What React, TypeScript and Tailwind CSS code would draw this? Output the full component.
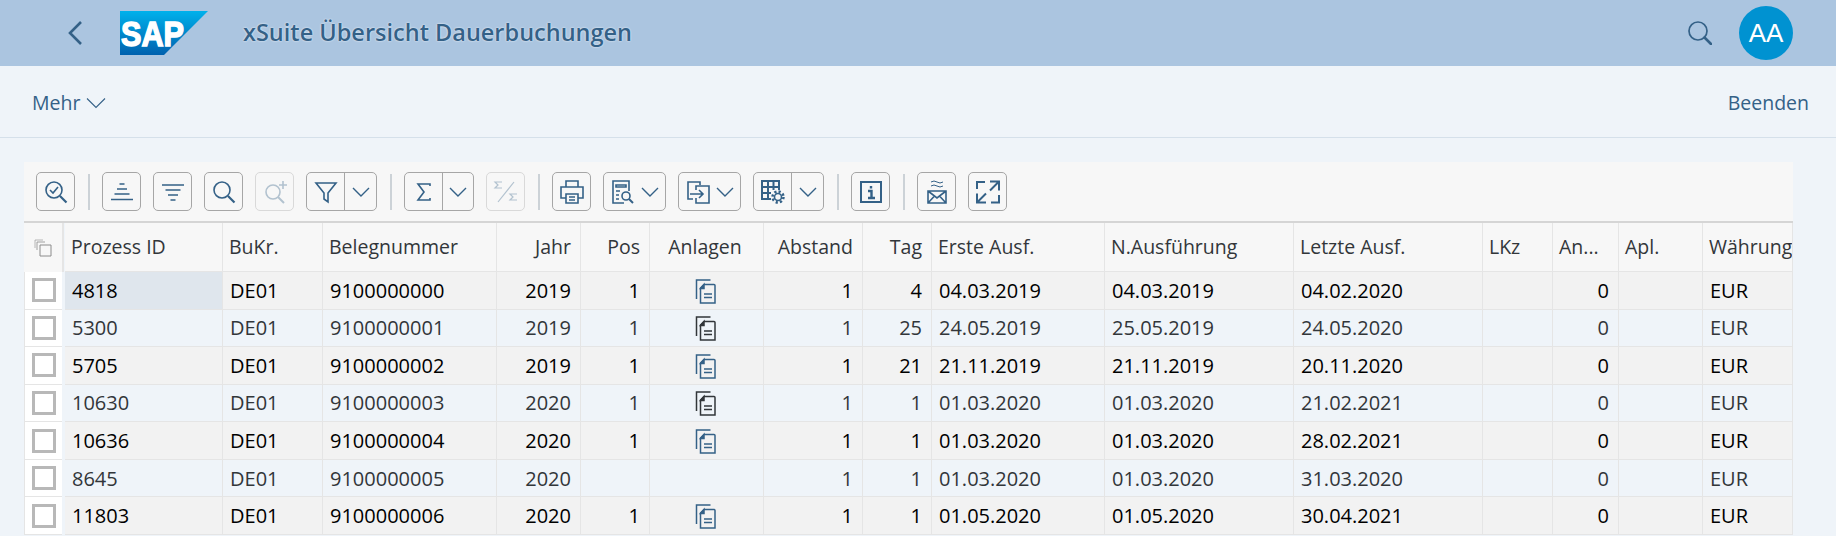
import type { ReactNode } from 'react'

const font = "font-['Open_Sans','Noto_Sans',sans-serif]"
const blue = '#346187'

const cols = 'grid-cols-[41px_158px_100px_174px_84px_69px_114px_99px_69px_173px_189px_189px_70px_66px_84px_90px]'

const headers: [string, string][] = [
  ['Prozess ID', 'left'],
  ['BuKr.', 'left'],
  ['Belegnummer', 'left'],
  ['Jahr', 'right'],
  ['Pos', 'right'],
  ['Anlagen', 'center'],
  ['Abstand', 'right'],
  ['Tag', 'right'],
  ['Erste Ausf.', 'left'],
  ['N.Ausführung', 'left'],
  ['Letzte Ausf.', 'left'],
  ['LKz', 'left'],
  ['An...', 'left'],
  ['Apl.', 'left'],
  ['Währung', 'left'],
]

const rows = [
  ['4818', 'DE01', '9100000000', '2019', '1', true, '1', '4', '04.03.2019', '04.03.2019', '04.02.2020'],
  ['5300', 'DE01', '9100000001', '2019', '1', true, '1', '25', '24.05.2019', '25.05.2019', '24.05.2020'],
  ['5705', 'DE01', '9100000002', '2019', '1', true, '1', '21', '21.11.2019', '21.11.2019', '20.11.2020'],
  ['10630', 'DE01', '9100000003', '2020', '1', true, '1', '1', '01.03.2020', '01.03.2020', '21.02.2021'],
  ['10636', 'DE01', '9100000004', '2020', '1', true, '1', '1', '01.03.2020', '01.03.2020', '28.02.2021'],
  ['8645', 'DE01', '9100000005', '2020', '', false, '1', '1', '01.03.2020', '01.03.2020', '31.03.2020'],
  ['11803', 'DE01', '9100000006', '2020', '1', true, '1', '1', '01.05.2020', '01.05.2020', '30.04.2021'],
] as const

const Btn = ({ children, disabled, w = 'w-[39px]' }: { children: ReactNode; disabled?: boolean; w?: string }) => (
  <div className={`${w} h-[39px] shrink-0 rounded-[5px] border flex items-center justify-center ${disabled ? 'border-[#d9d9d9]' : 'border-[#a6a6a6]'}`}>
    {children}
  </div>
)

const Chev = () => (
  <svg width="20" height="12" viewBox="0 0 20 12" fill="none" stroke={blue} strokeWidth="1.4"><path d="M2 2l8 8 8-8" /></svg>
)

const Split = ({ children, w = 'w-[71px]' }: { children: ReactNode; w?: string }) => (
  <div className={`${w} h-[39px] shrink-0 rounded-[5px] border border-[#a6a6a6] flex items-center`}>
    <div className="w-[38px] h-full flex items-center justify-center border-r border-[#a6a6a6]">{children}</div>
    <div className="flex-1 flex items-center justify-center"><Chev /></div>
  </div>
)

const Sep = () => <div className="w-[2px] h-[36px] ml-[13px] mr-[12px] bg-[#ccd2d7] shrink-0" />

const Ico = ({ children, op = 1 }: { children: ReactNode; op?: number }) => (
  <svg width="26" height="26" viewBox="0 0 26 26" fill="none" stroke={blue} strokeWidth="1.6" opacity={op}>{children}</svg>
)

const Attach = ({ color }: { color: string }) => (
  <svg width="22" height="26" viewBox="0 0 22 26" fill="none" stroke={color} strokeWidth="1.5">
    <path d="M1.500 21V2h14" />
    <path d="M9 6.500h10a1 1 0 0 1 1 1V25H5.500V10z" />
    <path d="M5.500 10.500L9 6.500v4z" fill={color} />
    <path d="M9 16h8M9 19.500h8" />
  </svg>
)

const Toolbar = () => (
  <div className="h-[61px] flex items-center pl-[12px] bg-[#f7f7f7] border-b-2 border-[#d5d5d5]">
    <Btn>
      <Ico><circle cx="11" cy="11" r="8" /><path d="M17 17l6.500 6.500" strokeWidth="2.200" /><path d="M7 11l3 3 5-6" /></Ico>
    </Btn>
    <Sep />
    <div className="flex gap-[12px]">
      <Btn><Ico><path d="M10.500 5h5M8 10h10M5.500 15h15M2 20.500h22" /></Ico></Btn>
      <Btn><Ico><path d="M2 6h22M5.500 11h15M8 16h10M10.500 21h5" /></Ico></Btn>
      <Btn><Ico><circle cx="11" cy="11" r="8" /><path d="M17 17l6.500 6.500" strokeWidth="2.200" /></Ico></Btn>
      <Btn disabled>
        <Ico op={0.35}><circle cx="11" cy="13" r="7" /><path d="M16 18l6 6" strokeWidth="2" /><path d="M21 2v8M17 6h8" /></Ico>
      </Btn>
      <Split><Ico><path d="M3 4h20l-8 10v9l-4-3v-6z" /></Ico></Split>
    </div>
    <Sep />
    <div className="flex gap-[12px]">
      <Split w="w-[70px]"><Ico><path d="M19 7V5H7l6 8-6 8h12v-2" /></Ico></Split>
      <Btn disabled>
        <svg width="26" height="26" viewBox="0 0 26 26" fill="none" stroke={blue} strokeWidth="1.200" opacity="0.35">
          <path d="M9 3H2l3 3-3 3h7M21 3L5 23M24 15h-7l3 3-3 3h7" />
        </svg>
      </Btn>
    </div>
    <Sep />
    <div className="flex gap-[12px]">
      <Btn>
        <Ico><path d="M7 8V2h12v6M7 19H2V8h22v11h-5" /><path d="M7 15h12v9H7zM10 18h6M10 21h6" /></Ico>
      </Btn>
      <Btn w="w-[63px]">
        <div className="flex items-center gap-[4px]">
          <Ico><path d="M14 24H3V2h16v10M6 6h10v2H6zM6 12h4M6 16h3M6 20h3" /><circle cx="16" cy="17" r="4" /><path d="M19 20l4 4" strokeWidth="2" /></Ico>
          <Chev />
        </div>
      </Btn>
      <Btn w="w-[63px]">
        <div className="flex items-center gap-[4px]">
          <Ico><path d="M15 6V3H3v17h5M11 11V7h13v17H11v-5M5 15h13M14 11l4 4-4 4" /></Ico>
          <Chev />
        </div>
      </Btn>
      <Split>
        <Ico>
          <path d="M11 20H2V2h17v9M2 8h17M2 14h9M8 2v18M13.500 2v9" strokeWidth="2" />
          <circle cx="18" cy="18" r="3.500" />
          <circle cx="18" cy="18" r="5.500" strokeDasharray="2.200 2.100" strokeWidth="2.500" />
        </Ico>
      </Split>
    </div>
    <Sep />
    <Btn>
      <Ico><path d="M3 3h20v20H3z" strokeWidth="2" /><path d="M13 7v2.500M10 12h3.500v7M10 19h7" strokeWidth="2.400" /></Ico>
    </Btn>
    <Sep />
    <div className="flex gap-[12px]">
      <Btn>
        <Ico><path d="M4 12h18v12H4zM4 12l9 7 9-7M4 24l6.500-7M22 24l-6.500-7" /><path d="M7 3q3-2 6 0t6 0M7 7q3-2 6 0t6 0" strokeWidth="1" /></Ico>
      </Btn>
      <Btn>
        <Ico><path d="M15 2.500h9v9M24 2.500l-9 9M11 23.500H2v-9M2 23.500l9-9M2 10V3h8M24 16v7.500h-8" strokeWidth="2" /></Ico>
      </Btn>
    </div>
  </div>
)

const App = () => {
  return (
    <div className={`w-[1836px] h-[536px] overflow-hidden bg-[#eff4f9] ${font}`}>
      <header className="h-[66px] bg-[#abc5e0] flex items-center pl-[67px] pr-[43px] text-[#346187]">
        <svg width="16" height="24" viewBox="0 0 16 24" fill="none" stroke={blue} strokeWidth="2.600"><path d="M14 1L3 12l11 11" /></svg>
        <svg className="ml-[37px]" width="88" height="44" viewBox="0 0 88 44">
          <defs>
            <linearGradient id="sap" x1="0" y1="0" x2="0" y2="1">
              <stop offset="0" stopColor="#00b1eb" />
              <stop offset="1" stopColor="#0061ae" />
            </linearGradient>
          </defs>
          <path d="M0 0h88L44 44H0z" fill="url(#sap)" />
          <text x="1" y="35" fill="#fff" stroke="#fff" strokeWidth="1.500" fontFamily="'Liberation Sans',sans-serif" fontWeight="700" fontSize="35" textLength="63" lengthAdjust="spacingAndGlyphs">SAP</text>
        </svg>
        <div className="ml-[35px] text-[23.5px] font-semibold [text-shadow:0_0_2px_#fff]">xSuite Übersicht Dauerbuchungen</div>
        <svg className="ml-auto" width="24" height="24" viewBox="0 0 24 24" fill="none" stroke={blue}>
          <circle cx="10" cy="10" r="9" strokeWidth="1.700" />
          <path d="M16.500 16.500L23 23" strokeWidth="2.600" strokeLinecap="round" />
        </svg>
        <div className="ml-[27px] w-[54px] h-[54px] rounded-full bg-[#0092d1] text-white text-[26px] font-['Liberation_Sans',sans-serif] flex items-center justify-center">AA</div>
      </header>

      <div className="h-[72px] pt-[3px] border-b border-[#d5e0ea] flex items-center justify-between pl-[32px] pr-[27px] text-[#346187] text-[19.5px]">
        <div className="flex items-center gap-[6px]">
          Mehr
          <svg width="20" height="12" viewBox="0 0 20 12" fill="none" stroke={blue} strokeWidth="1.100"><path d="M1 1.500l9 9 9-9" /></svg>
        </div>
        <div>Beenden</div>
      </div>

      <div className="ml-[24px] w-[1769px] mt-[24px]">
        <Toolbar />
        <div className={`grid ${cols} h-[49px] text-[19.5px]`}>
          <div className="bg-[#f7f7f7] border-r-2 border-[#e5e5e5] mr-[1px] flex items-center justify-center">
            <svg width="18" height="18" viewBox="0 0 18 18" fill="none" stroke="#8c8c8c" strokeWidth="1">
              <path d="M1 9V1h8" opacity="0.6" />
              <path d="M3 11V3h8" opacity="0.8" />
              <path d="M6 6h11v11H6z" />
            </svg>
          </div>
          {headers.map(([h, align]) => (
            <div key={h} className={`bg-[#f7f7f7] border-r border-b border-[#e5e5e5] flex items-center pl-[6px] pr-[9px] whitespace-nowrap overflow-hidden text-[#32363a] ${align === 'right' ? 'justify-end' : align === 'center' ? 'justify-center' : ''}`}>
              {h}
            </div>
          ))}
        </div>
        {rows.map((r, i) => {
          const alt = i % 2 === 1
          const text = alt ? 'text-[#32363a]' : 'text-black'
          const bg = alt ? 'bg-[#eff4f9]' : 'bg-[#f2f2f2]'
          return (
            <div key={r[0]} className={`grid ${cols} h-[37.57px] text-[20px] ${text}`}>
              <div className="bg-white border-b border-l border-[#e5e5e5] mr-[3px] flex items-center justify-center">
                <div className="w-[24px] h-[24px] border-[3.500px] border-[#b8b8b8] bg-white" />
              </div>
              {r.map((v, j) => {
                const spec = headers[j][1]
                const active = i === 0 && j === 0
                return (
                  <div
                    key={j}
                    className={`border-b border-r border-[#e5e5e5] flex items-center pl-[7px] pr-[9px] pt-[1px] whitespace-nowrap overflow-hidden ${active ? 'bg-[#dfe6ed]' : bg} ${spec === 'right' ? 'justify-end' : spec === 'center' ? 'justify-center' : ''}`}
                  >
                    {v === true ? <Attach color={alt ? '#32363a' : blue} /> : v}
                  </div>
                )
              })}
              {[0, 1, 2, 3].map((k) => (
                <div key={k} className={`border-b border-r border-[#e5e5e5] flex items-center pl-[7px] pr-[9px] pt-[1px] ${bg} ${k === 1 ? 'justify-end' : ''}`}>
                  {k === 1 ? '0' : k === 3 ? 'EUR' : ''}
                </div>
              ))}
            </div>
          )
        })}
      </div>
    </div>
  )
}

export default App
